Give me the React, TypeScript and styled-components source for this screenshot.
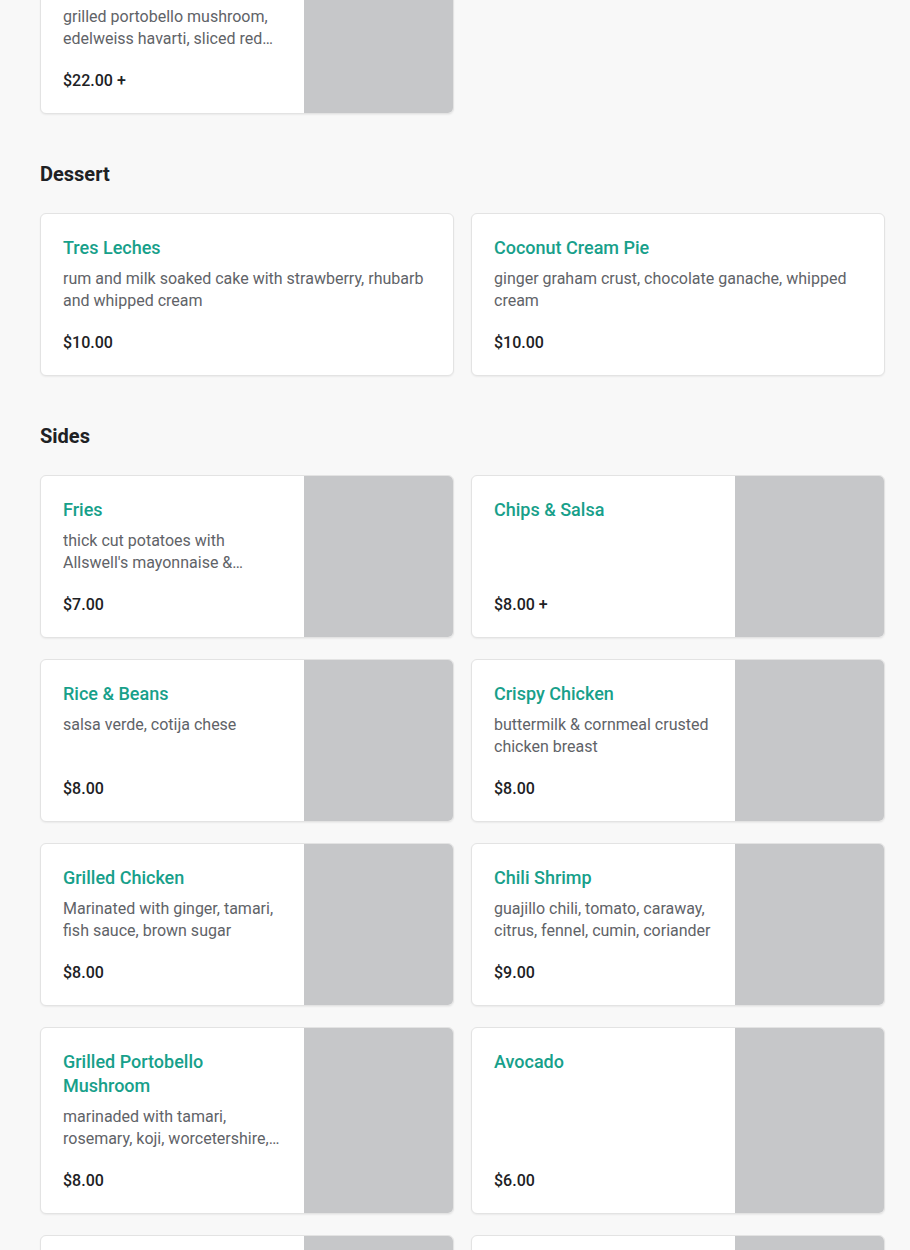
import styled, { createGlobalStyle } from "styled-components";

type Item = {
  name: string;
  desc?: string;
  price: string;
  options?: boolean;
  image?: boolean;
};

type Section = {
  title?: string;
  items: Item[];
};

const sections: Section[] = [
  {
    items: [
      {
        name: "Portobello Sandwich",
        desc: "grilled portobello mushroom, edelweiss havarti, sliced red onion, pickles, aioli",
        price: "$22.00",
        options: true,
        image: true,
      },
    ],
  },
  {
    title: "Dessert",
    items: [
      {
        name: "Tres Leches",
        desc: "rum and milk soaked cake with strawberry, rhubarb and whipped cream",
        price: "$10.00",
      },
      {
        name: "Coconut Cream Pie",
        desc: "ginger graham crust, chocolate ganache, whipped cream",
        price: "$10.00",
      },
    ],
  },
  {
    title: "Sides",
    items: [
      {
        name: "Fries",
        desc: "thick cut potatoes with Allswell's mayonnaise & ketchup",
        price: "$7.00",
        image: true,
      },
      { name: "Chips & Salsa", price: "$8.00", options: true, image: true },
      {
        name: "Rice & Beans",
        desc: "salsa verde, cotija chese",
        price: "$8.00",
        image: true,
      },
      {
        name: "Crispy Chicken",
        desc: "buttermilk & cornmeal crusted chicken breast",
        price: "$8.00",
        image: true,
      },
      {
        name: "Grilled Chicken",
        desc: "Marinated with ginger, tamari, fish sauce, brown sugar",
        price: "$8.00",
        image: true,
      },
      {
        name: "Chili Shrimp",
        desc: "guajillo chili, tomato, caraway, citrus, fennel, cumin, coriander",
        price: "$9.00",
        image: true,
      },
      {
        name: "Grilled Portobello Mushroom",
        desc: "marinaded with tamari, rosemary, koji, worcetershire, garlic",
        price: "$8.00",
        image: true,
      },
      { name: "Avocado", price: "$6.00", image: true },
      { name: "Sauteed Greens", desc: "garlic, chili, lemon", price: "$7.00", image: true },
      { name: "Pickles", desc: "seasonal vegetables", price: "$5.00", image: true },
    ],
  },
];

const GlobalStyle = createGlobalStyle`
  html, body {
    margin: 0;
    padding: 0;
    background: #f8f8f8;
    font-family: Roboto, "Noto Sans", Arial, sans-serif;
    color: #202124;
  }
`;

const Page = styled.main`
  padding: 0 25px 0 40px;
  overflow: hidden;
  height: 1250px;
`;

// the page is scrolled: the first card sits partly above the top edge
const Wrap = styled.div`
  margin-top: -49px;
`;

const SectionBlock = styled.section`
  margin-bottom: 48px;
`;

const Heading = styled.h2`
  margin: 0 0 27px;
  font-size: 20px;
  line-height: 24px;
  font-weight: 700;
  color: #202124;
`;

const Grid = styled.div`
  display: grid;
  grid-template-columns: 1fr 1fr;
  column-gap: 17px;
  row-gap: 21px;
`;

const Card = styled.article`
  display: flex;
  min-height: 163px;
  background: #fff;
  border: 1px solid #e3e3e3;
  border-radius: 6px;
  box-shadow: 0 1px 2px rgba(0, 0, 0, 0.06);
  overflow: hidden;
  box-sizing: border-box;
`;

const Body = styled.div`
  flex: 1;
  min-width: 0;
  display: flex;
  flex-direction: column;
  padding: 22px 22px 21px;
`;

const Name = styled.h3`
  margin: 0;
  font-size: 18px;
  line-height: 24px;
  font-weight: 500;
  color: #17a08a;
`;

const Desc = styled.p`
  margin: 8px 0 0;
  font-size: 16px;
  line-height: 22px;
  color: #5f6368;
  display: -webkit-box;
  -webkit-line-clamp: 2;
  -webkit-box-orient: vertical;
  overflow: hidden;
`;

const Price = styled.div`
  margin-top: auto;
  padding-top: 20px;
  font-size: 16px;
  line-height: 22px;
  font-weight: 500;
  color: #202124;
`;

const Thumb = styled.div`
  flex: 0 0 149px;
  background: #c6c7c9;
`;

const MenuCard = ({ item }: { item: Item }) => (
  <Card>
    <Body>
      <Name>{item.name}</Name>
      {item.desc && <Desc>{item.desc}</Desc>}
      <Price>
        {item.price}
        {item.options ? " +" : ""}
      </Price>
    </Body>
    {item.image && <Thumb />}
  </Card>
);

export default function App() {
  return (
    <>
      <GlobalStyle />
      <Page>
        <Wrap>
          {sections.map((section, i) => (
            <SectionBlock key={i}>
              {section.title && <Heading>{section.title}</Heading>}
              <Grid>
                {section.items.map((item) => (
                  <MenuCard key={item.name} item={item} />
                ))}
              </Grid>
            </SectionBlock>
          ))}
        </Wrap>
      </Page>
    </>
  );
}
